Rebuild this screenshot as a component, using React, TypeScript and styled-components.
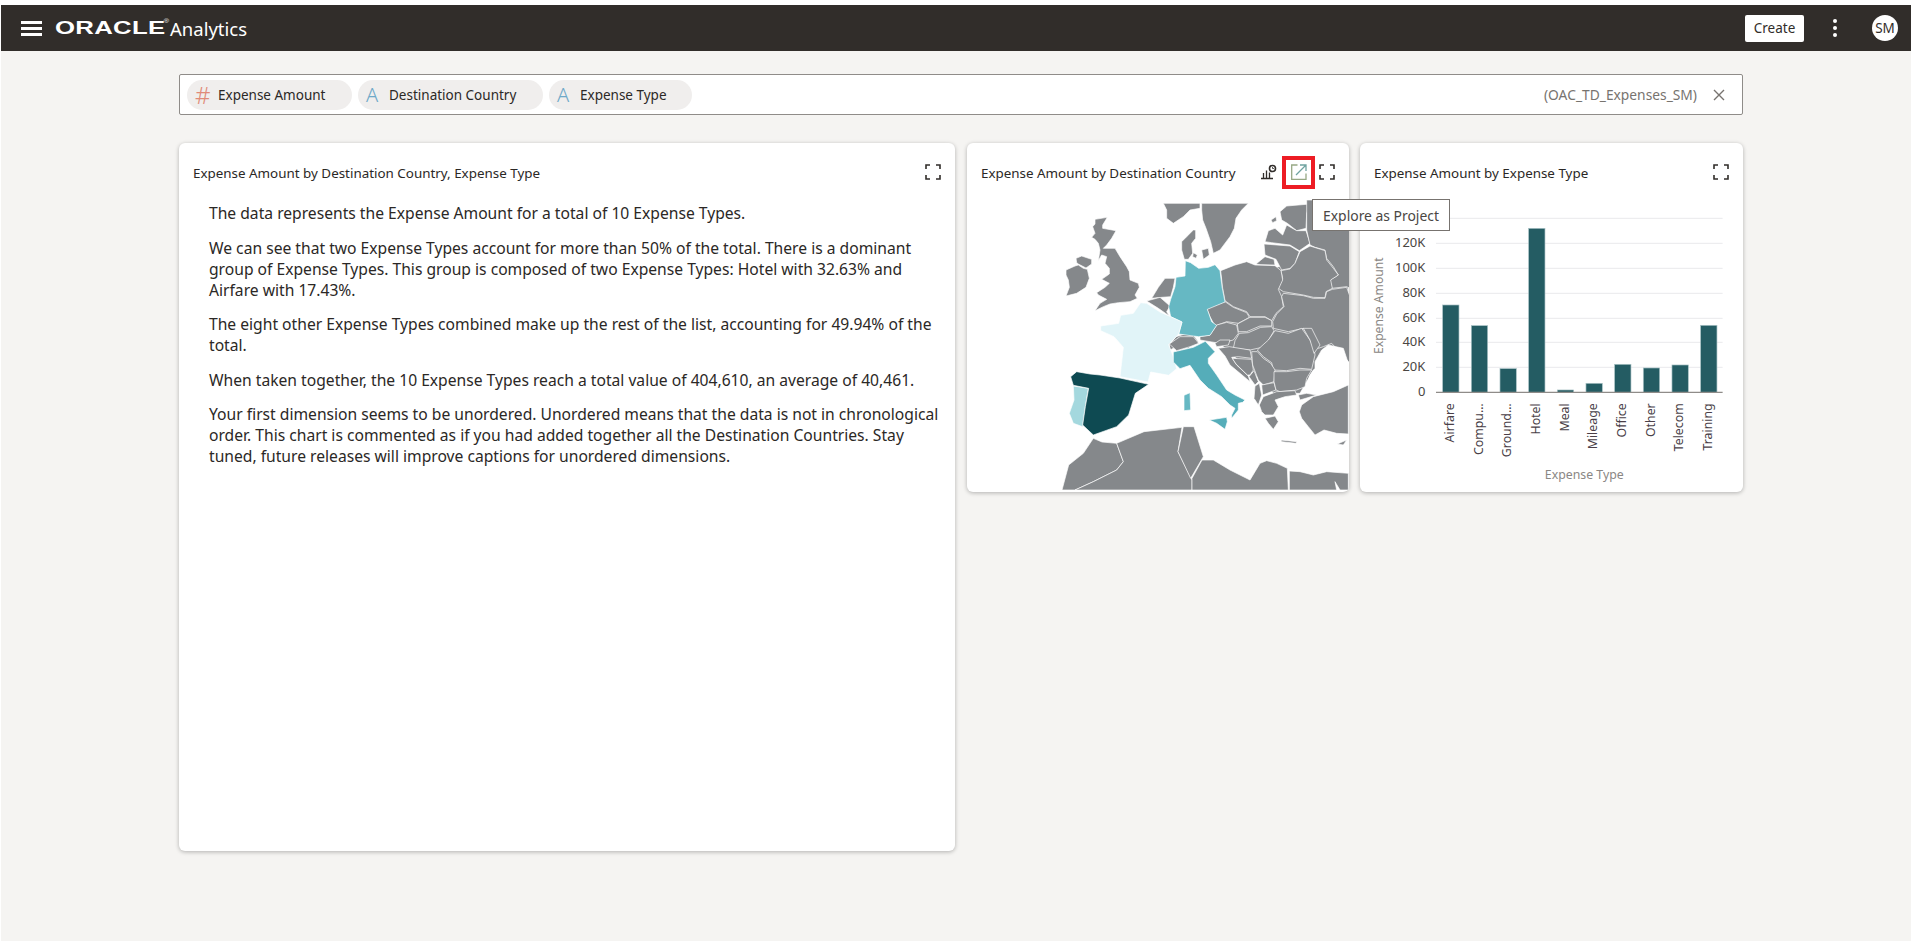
import React from 'react'
import styled, { createGlobalStyle } from 'styled-components'

const GlobalStyle = createGlobalStyle`
  html, body {
    margin: 0;
    padding: 0;
    background: #fff;
    font-family: "Noto Sans", "Open Sans", Arial, sans-serif;
    color: #2b2826;
  }
`

const Page = styled.div`
  margin: 5px 0 0 1px;
  height: 936px;
  background: #f5f4f2;
  overflow: hidden;
`

const Header = styled.header`
  height: 46px;
  background: #312d2a;
  display: flex;
  align-items: center;
  padding: 0 13px 0 20px;
  color: #fff;
`

const Burger = styled.div`
  width: 21px;
  height: 15px;
  display: flex;
  flex-direction: column;
  justify-content: space-between;
  margin-right: 13px;
  span {
    height: 3px;
    background: #fff;
    display: block;
  }
`

const Wordmark = styled.span`
  font-family: "Liberation Sans", Arial, sans-serif;
  font-weight: 700;
  font-size: 18px;
  line-height: 1;
  letter-spacing: 0.2px;
  width: 106px;
  display: inline-block;
  transform: scaleX(1.43);
  transform-origin: left center;
  white-space: nowrap;
  position: relative;
  sup {
    position: absolute;
    font-size: 5px;
    font-weight: 400;
    top: 0;
    left: 76px;
  }
`

const Product = styled.span`
  font-size: 18.5px;
  margin-left: 9px;
  flex: 1;
`

const CreateButton = styled.button`
  width: 59px;
  height: 27px;
  background: #fff;
  border: 0;
  border-radius: 2px;
  font: 13.5px "Noto Sans", sans-serif;
  color: #312d2a;
  padding: 0;
`

const Kebab = styled.div`
  width: 4px;
  margin: 0 35px 0 29px;
  display: flex;
  flex-direction: column;
  gap: 3px;
  i {
    width: 4px;
    height: 4px;
    border-radius: 50%;
    background: #fff;
    display: block;
  }
`

const Avatar = styled.div`
  width: 26px;
  height: 26px;
  border-radius: 50%;
  background: #fff;
  color: #312d2a;
  font-size: 13.5px;
  display: flex;
  align-items: center;
  justify-content: center;
`

const Main = styled.main`
  width: 1564px;
  margin-left: 178px;
  padding-top: 23px;
`

const SearchBar = styled.div`
  height: 41px;
  box-sizing: border-box;
  background: #fff;
  border: 1px solid #8f8c89;
  border-radius: 2px;
  display: flex;
  align-items: center;
  padding: 0 17px 0 7px;
  gap: 6px;
`

const Pill = styled.div<{ $width: number }>`
  width: ${p => p.$width}px;
  height: 30px;
  border-radius: 15px;
  background: #f0eeed;
  display: flex;
  align-items: center;
  padding-left: 8px;
  box-sizing: border-box;
  font-size: 13.5px;
  white-space: nowrap;
`

const PillGlyph = styled.span<{ $color: string; $size: number }>`
  color: ${p => p.$color};
  font-size: ${p => p.$size}px;
  font-weight: 300;
  width: 23px;
  line-height: 1;
`

const DataSet = styled.span`
  margin-left: auto;
  color: #77736f;
  font-size: 13.8px;
`

const CloseButton = styled.span`
  display: flex;
  margin-left: 10px;
  color: #77736f;
`

const Grid = styled.div`
  display: grid;
  grid-template-columns: 777px 382px 383px;
  column-gap: 11px;
  align-items: start;
  margin-top: 28px;
`

const Card = styled.section<{ $height: number }>`
  height: ${p => p.$height}px;
  background: #fff;
  border-radius: 6px;
  box-shadow: 0 1px 4px rgba(0, 0, 0, 0.28);
  position: relative;
`

const NarrativeCard = styled(Card)`
  margin-right: 1px;
`

const CardHead = styled.div`
  height: 57px;
  box-sizing: border-box;
  display: flex;
  align-items: center;
  padding: 1px 14px 0 14px;
  font-size: 13.4px;
`

const CardTitle = styled.div`
  flex: 1;
  white-space: nowrap;
  margin-top: 2px;
`

const IconSlot = styled.span`
  display: flex;
  align-items: center;
  justify-content: center;
`

const Highlight = styled.span`
  width: 33px;
  height: 33px;
  box-sizing: border-box;
  border: 4px solid #ed1c24;
  display: flex;
  align-items: center;
  justify-content: center;
  margin: 0 4px 0 5px;
`

const Tooltip = styled.div`
  position: absolute;
  left: 345px;
  top: 56px;
  z-index: 2;
  width: 138px;
  height: 32px;
  box-sizing: border-box;
  background: #fff;
  border: 1px solid #77736f;
  font-size: 13.9px;
  color: #4a4643;
  display: flex;
  align-items: center;
  justify-content: center;
  white-space: nowrap;
`

const Narrative = styled.div`
  padding: 3px 8px 0 30px;
  font-size: 15.65px;
  line-height: 21px;
  p {
    margin: 0 0 13.5px;
  }
`

const MapSvg = styled.svg`
  display: block;
  width: 382px;
  height: 292px;
`

const Land = styled.polygon`
  stroke: #fff;
  stroke-width: 2;
  stroke-linejoin: round;
`

const ChartSvg = styled.svg`
  display: block;
  width: 383px;
  height: 292px;
  font-family: "Noto Sans", sans-serif;
`

const ExpandIcon = () => (
  <svg width="16" height="16" viewBox="0 0 16 16" fill="none" stroke="#312d2a" strokeWidth="1.6">
    <path d="M1 5V1h4M11 1h4v4M15 11v4h-4M5 15H1v-4" />
  </svg>
)

const InsightIcon = () => (
  <svg width="16" height="16" viewBox="0 0 16 16" fill="none" stroke="#312d2a">
    <path d="M0 14.5h12M2.5 14V9M5.5 14V6.5M8.5 14V8.5" strokeWidth="1.3" />
    <circle cx="11.5" cy="4.5" r="3" strokeWidth="1.6" />
    <path d="M11.5 3v1.5h1.5" strokeWidth="0.8" />
  </svg>
)

const ExploreIcon = () => (
  <svg width="16" height="16" viewBox="0 0 16 16" fill="none" stroke="#97a884" strokeWidth="1.3">
    <path d="M6.5 1H.7v14.3H15V9.5" />
    <path d="M5 11L14.5 1.5M9 1h6v6" stroke="#6fa3a0" />
  </svg>
)

const grey = '#85888b'
const sea = '#ffffff'

type Shape = { fill: string; points: string }
type Sheet = { dx: number; dy: number; shapes: Shape[] }

// traced by hand, each sheet in the coordinates of its own 3x crop of the map
const mapSheets: Sheet[] = [
  {
    // underlay, so the inner borders stay thin
    dx: 0,
    dy: 0,
    shapes: [
      {
        fill: grey,
        points:
          '790,400 960,380 1060,330 1165,300 1165,640 1060,690 1020,760 940,760 880,700 800,630 770,600 760,520',
      },
    ],
  },
  {
    // british isles, low countries
    dx: 270,
    dy: 180,
    shapes: [
      { fill: grey, points: '340,10 450,10 450,25 420,30 400,50 370,70 350,55 350,30' },
      { fill: grey, points: '395,125 410,110 430,90 437,90 437,115 425,130 428,160 415,178 403,178 395,150' },
      { fill: grey, points: '430,158 442,165 438,175 428,170' },
      {
        fill: grey,
        points:
          '128,80 135,72 135,58 172,52 158,75 158,85 198,92 185,115 170,135 160,145 195,145 210,170 230,200 238,215 240,240 265,250 268,262 255,285 262,295 240,305 205,308 180,312 160,320 135,332 150,310 170,298 145,285 140,278 165,262 178,250 155,238 178,222 178,205 165,190 170,170 155,165 145,182 150,150 145,130 135,118 125,112 135,100',
      },
      { fill: grey, points: '48,210 75,198 85,195 100,205 112,208 118,235 108,262 80,280 48,288 58,262 55,240 48,225' },
      { fill: grey, points: '78,175 95,168 125,178 125,192 108,204 85,192 80,188' },
      { fill: grey, points: '305,295 325,262 345,235 375,235 370,262 362,290 335,292' },
      { fill: grey, points: '290,303 330,292 360,318 350,335 358,348 325,325' },
      { fill: grey, points: '358,435 378,410 405,402 430,405 445,425 425,435 415,445 385,437 360,450' },
    ],
  },
  {
    // scandinavia to poland and ukraine
    dx: 720,
    dy: 180,
    shapes: [
      { fill: grey, points: '5,10 145,10 125,30 108,55 103,85 90,110 60,150 40,160 32,125 18,85 8,60 5,30' },
      { fill: grey, points: '5,150 25,145 28,165 10,178' },
      { fill: grey, points: '213,60 228,50 230,62 218,68' },
      { fill: grey, points: '240,35 260,18 330,12 320,40 318,85 290,92 262,70 245,60' },
      { fill: grey, points: '195,125 205,92 225,85 248,105 260,75 290,92 318,92 330,130 298,152 270,135 215,128' },
      { fill: grey, points: '192,132 270,138 298,155 285,190 270,205 245,210 228,178 195,165' },
      { fill: grey, points: '168,192 195,170 222,178 225,195 180,194' },
      {
        fill: grey,
        points:
          '320,0 450,0 450,265 440,260 395,265 390,240 415,225 400,200 380,175 375,150 345,142 330,135 320,90',
      },
      {
        fill: grey,
        points:
          '300,155 330,138 375,152 380,180 400,205 415,225 392,240 397,265 378,275 375,293 340,292 310,285 250,275 235,265 248,235 243,212 270,207 285,190',
      },
      {
        fill: grey,
        points:
          '62,212 105,195 140,185 165,195 225,197 243,212 248,240 235,268 245,290 250,320 228,340 215,362 195,350 150,350 140,335 100,320 75,302 68,265',
      },
      {
        fill: grey,
        points:
          '250,280 310,287 340,295 375,295 380,275 397,268 440,262 450,290 450,490 395,430 370,440 355,445 330,415 310,385 265,395 220,385 218,365 230,342 252,320 245,290',
      },
      { fill: grey, points: '20,325 75,305 100,322 140,338 148,352 115,370 80,365 45,378 30,350' },
      { fill: grey, points: '150,352 195,352 215,362 215,378 180,378 140,395 115,395 112,372' },
      { fill: grey, points: '0,410 30,405 50,375 80,367 110,375 115,400 100,420 60,430 30,425 0,420' },
      { fill: grey, points: '118,400 145,398 182,382 215,380 222,392 195,440 150,450 100,445 105,422' },
    ],
  },
  {
    // romania, moldova, france, iberia, italy
    dx: 0,
    dy: 0,
    shapes: [
      {
        fill: grey,
        points:
          '945,572 985,580 1025,565 1050,600 1062,625 1065,645 1055,688 1020,685 980,692 940,690 935,668 910,650 892,630 925,600',
      },
      { fill: grey, points: '1030,565 1055,565 1080,615 1062,640 1050,600' },
      {
        fill: '#66b8c3',
        points:
          '676,362 692,368 716,385 745,382 765,374 780,392 786,440 795,486 742,508 755,545 770,556 750,586 716,590 700,588 656,582 666,546 632,530 626,500 632,478 645,440 648,412 675,408',
      },
      {
        fill: '#e1f4f8',
        points:
          '542,488 560,490 600,516 632,530 666,546 656,582 626,614 640,650 650,686 626,706 572,696 564,726 480,710 490,622 462,590 422,572 422,558 476,550 482,526 520,520',
      },
      {
        fill: '#55adb9',
        points:
          '640,636 700,622 736,604 765,635 745,655 745,670 770,705 800,750 825,765 855,780 848,787 835,790 835,810 815,835 815,825 825,805 810,795 785,770 745,745 720,720 690,676 660,686 640,666',
      },
      { fill: '#66b8c3', points: '672,766 690,758 692,810 672,812' },
      { fill: '#a4d8de', points: '340,738 385,745 376,800 368,860 340,850 328,820 342,780' },
      {
        fill: '#0e4a52',
        points:
          '332,710 350,695 390,702 420,705 480,714 566,733 526,760 506,825 470,860 400,885 368,855 376,800 386,745 340,736',
      },
      { fill: grey, points: '628,612 660,590 700,590 716,610 690,620 650,632' },
      // africa
      { fill: grey, points: '306,1050 326,975 370,940 400,895 426,906 470,910 490,965 470,990 400,1025 345,1050' },
      { fill: grey, points: '470,910 552,875 666,862 654,935 696,1020 696,1050 345,1050 400,1025 470,990 490,965' },
      { fill: grey, points: '670,860 702,860 730,950 692,1015 654,935' },
      {
        fill: grey,
        points: '696,1050 696,1015 726,960 760,960 810,990 870,1020 885,995 900,970 920,962 950,970 982,985 985,1050',
      },
      { fill: grey, points: '988,993 1020,995 1060,1005 1100,995 1165,1000 1165,1050 1140,1050 1125,1025 1130,1050 988,1050' },
    ],
  },
  {
    // adriatic to the black sea
    dx: 720,
    dy: 600,
    shapes: [
      { fill: sea, points: '345,65 365,30 385,15 430,25 445,70 445,130 400,150 340,165 318,140 330,105 345,85' },
      { fill: '#55adb9', points: '28,240 80,232 82,245 75,268 50,250' },
      { fill: grey, points: '50,20 85,15 90,0 60,0 45,10' },
      { fill: grey, points: '55,25 88,20 150,30 155,55 115,50 95,52 110,75 145,108 150,125 120,100 90,75 75,48' },
      { fill: grey, points: '97,55 155,58 160,90 150,105 142,105 108,72' },
      { fill: grey, points: '172,35 190,55 212,70 225,90 222,125 190,135 175,120 158,75 155,35' },
      { fill: grey, points: '147,110 162,92 175,125 165,135' },
      { fill: grey, points: '165,138 178,130 185,165 175,195 162,175' },
      { fill: grey, points: '185,135 222,128 228,150 188,165' },
      { fill: grey, points: '222,95 260,95 300,90 335,90 320,115 315,140 290,150 240,155 228,150 222,125' },
      { fill: grey, points: '178,195 190,170 230,155 285,152 290,165 255,170 240,175 225,180 235,200 220,225 195,225 185,215' },
      { fill: grey, points: '195,235 225,228 235,245 220,268 205,250' },
      { fill: grey, points: '243,300 290,305 288,310 245,305' },
      { fill: grey, points: '412,312 440,300 430,315' },
      { fill: grey, points: '295,165 320,160 350,165 300,180' },
      { fill: grey, points: '305,195 340,170 400,155 445,135 445,282 410,280 372,270 345,285 325,260 305,235 298,215' },
    ],
  },
]

const EuropeMap = () => (
  <MapSvg viewBox="21 180 1146 876">
    {mapSheets.map((sheet, i) => (
      <g key={i} transform={`translate(${sheet.dx} ${sheet.dy})`}>
        {sheet.shapes.map((c, j) => (
          <Land key={j} fill={c.fill} points={c.points} />
        ))}
      </g>
    ))}
  </MapSvg>
)

const bars = [
  { name: 'Airfare', top: 495 },
  { name: 'Compu…', top: 557 },
  { name: 'Ground…', top: 686 },
  { name: 'Hotel', top: 265 },
  { name: 'Meal', top: 750 },
  { name: 'Mileage', top: 730 },
  { name: 'Office', top: 673 },
  { name: 'Other', top: 684 },
  { name: 'Telecom', top: 675 },
  { name: 'Training', top: 556 },
]

const ticks = [
  { y: 235, label: '' },
  { y: 310, label: '120K' },
  { y: 385, label: '100K' },
  { y: 460, label: '80K' },
  { y: 535, label: '60K' },
  { y: 607, label: '40K' },
  { y: 682, label: '20K' },
  { y: 757, label: '0' },
]

// coordinates below are in the 3x crop of the chart, offset by the card origin
const BarChart = () => (
  <ChartSvg viewBox="0 0 383 292">
    <g transform="translate(0 -60) scale(0.3333)">
      {ticks.slice(0, -1).map(t => (
        <line key={t.y} x1="228" x2="1088" y1={t.y} y2={t.y} stroke="#e9e9ec" strokeWidth="3" />
      ))}
      {bars.map((b, i) => (
        <rect
          key={b.name}
          x={248 + i * 86}
          y={b.top}
          width="49"
          height={757 - b.top}
          fill="#245c63"
          stroke="#a9c2c5"
          strokeWidth="2"
        />
      ))}
      <line x1="228" x2="1088" y1="757" y2="757" stroke="#8f8c89" strokeWidth="4" />
      {ticks.map(t => (
        <text key={t.y} x="196" y={t.y + 12} textAnchor="end" fontSize="39" fill="#4a4643">
          {t.label}
        </text>
      ))}
      {bars.map((b, i) => (
        <text
          key={b.name}
          transform={`translate(${282 + i * 86} 790) rotate(-90)`}
          textAnchor="end"
          fontSize="37"
          fill="#4a3f48"
        >
          {b.name}
        </text>
      ))}
      <text transform="translate(70 497) rotate(-90)" textAnchor="middle" fontSize="36.5" fill="#8a8784">
        Expense Amount
      </text>
      <text x="673" y="1016" textAnchor="middle" fontSize="37" fill="#8a8784">
        Expense Type
      </text>
    </g>
  </ChartSvg>
)

const App = () => (
  <>
    <GlobalStyle />
    <Page>
      <Header>
        <Burger>
          <span />
          <span />
          <span />
        </Burger>
        <Wordmark>
          ORACLE<sup>®</sup>
        </Wordmark>
        <Product>Analytics</Product>
        <CreateButton>Create</CreateButton>
        <Kebab>
          <i />
          <i />
          <i />
        </Kebab>
        <Avatar>SM</Avatar>
      </Header>
      <Main>
        <SearchBar>
          <Pill $width={165}>
            <PillGlyph $color="#e08a78" $size={24}>#</PillGlyph>
            Expense Amount
          </Pill>
          <Pill $width={185}>
            <PillGlyph $color="#6ea8c8" $size={20}>A</PillGlyph>
            Destination Country
          </Pill>
          <Pill $width={143}>
            <PillGlyph $color="#6ea8c8" $size={20}>A</PillGlyph>
            Expense Type
          </Pill>
          <DataSet>(OAC_TD_Expenses_SM)</DataSet>
          <CloseButton>
            <svg width="12" height="12" viewBox="0 0 12 12" stroke="#77736f" strokeWidth="1.4">
              <path d="M1 1l10 10M11 1L1 11" />
            </svg>
          </CloseButton>
        </SearchBar>
        <Grid>
          <NarrativeCard $height={708}>
            <CardHead>
              <CardTitle>Expense Amount by Destination Country, Expense Type</CardTitle>
              <IconSlot>
                <ExpandIcon />
              </IconSlot>
            </CardHead>
            <Narrative>
              <p>The data represents the Expense Amount for a total of 10 Expense Types.</p>
              <p>
                We can see that two Expense Types account for more than 50% of the total. There is a dominant group of
                Expense Types. This group is composed of two Expense Types: Hotel with 32.63% and Airfare with 17.43%.
              </p>
              <p>
                The eight other Expense Types combined make up the rest of the list, accounting for 49.94% of the total.
              </p>
              <p>When taken together, the 10 Expense Types reach a total value of 404,610, an average of 40,461.</p>
              <p>
                Your first dimension seems to be unordered. Unordered means that the data is not in chronological order.
                This chart is commented as if you had added together all the Destination Countries. Stay tuned, future
                releases will improve captions for unordered dimensions.
              </p>
            </Narrative>
          </NarrativeCard>
          <Card $height={349}>
            <CardHead>
              <CardTitle>Expense Amount by Destination Country</CardTitle>
              <IconSlot>
                <InsightIcon />
              </IconSlot>
              <Highlight>
                <ExploreIcon />
              </Highlight>
              <IconSlot>
                <ExpandIcon />
              </IconSlot>
            </CardHead>
            <Tooltip>Explore as Project</Tooltip>
            <EuropeMap />
          </Card>
          <Card $height={349}>
            <CardHead>
              <CardTitle>Expense Amount by Expense Type</CardTitle>
              <IconSlot>
                <ExpandIcon />
              </IconSlot>
            </CardHead>
            <BarChart />
          </Card>
        </Grid>
      </Main>
    </Page>
  </>
)

export default App
